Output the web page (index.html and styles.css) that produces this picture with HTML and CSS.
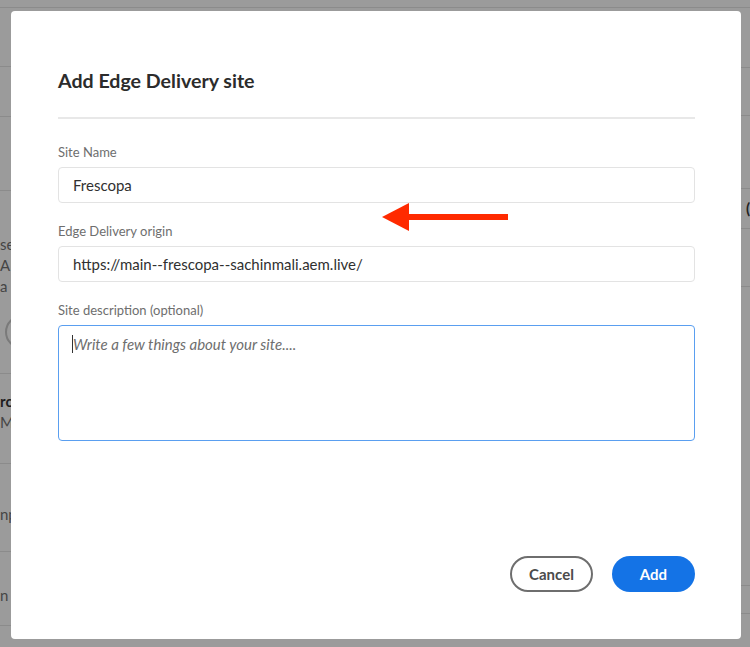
FILE: index.html
```html
<!DOCTYPE html>
<html lang="en">
<head>
<meta charset="utf-8">
<title>Add Edge Delivery site</title>
<link rel="stylesheet" href="styles.css">
</head>
<body>
<div class="backdrop">
  <div class="bg-col bg-left">
    <div class="row h7"></div>
    <div class="row h59"></div>
    <div class="row h50"></div>
    <div class="row h74"></div>
    <div class="row h183">
      <div class="bg-text l1">se</div>
      <div class="bg-text l2">AI</div>
      <div class="bg-text l3">a b</div>
      <div class="bg-circle"></div>
    </div>
    <div class="row h90">
      <div class="bg-text bold l4">rc</div>
      <div class="bg-text l5">M</div>
    </div>
    <div class="row h88">
      <div class="bg-text l6">np</div>
    </div>
    <div class="row h74">
      <div class="bg-text l7">n</div>
    </div>
  </div>
  <div class="bg-col bg-right">
    <div class="row h7"></div>
    <div class="row h60"></div>
    <div class="row h48"></div>
    <div class="row h73"></div>
    <div class="row h40"><div class="bg-text dark r1">(</div></div>
    <div class="row h58"></div>
    <div class="row h299"></div>
    <div class="row h28"></div>
  </div>
</div>

<div class="modal">
  <h1 class="title">Add Edge Delivery site</h1>
  <div class="divider"></div>
  <div class="field">
    <div class="label">Site Name</div>
    <div class="input">Frescopa</div>
  </div>
  <div class="field">
    <div class="label">Edge Delivery origin</div>
    <div class="input">https://main--frescopa--sachinmali.aem.live/</div>
  </div>
  <div class="field">
    <div class="label">Site description (optional)</div>
    <div class="textarea"><span class="caret"></span><span class="placeholder">Write a few things about your site....</span></div>
  </div>
  <div class="footer">
    <button class="btn btn-secondary">Cancel</button>
    <button class="btn btn-primary">Add</button>
  </div>
</div>

<svg class="arrow" width="127" height="28" viewBox="0 0 127 28">
  <polygon points="0,14 27,0 27,28" fill="#ff2a00"/>
  <rect x="26" y="11" width="100" height="6" fill="#ff2a00"/>
</svg>
</body>
</html>
```
FILE: styles.css
```css
html, body {
  margin: 0;
  padding: 0;
}
body {
  width: 750px;
  height: 647px;
  overflow: hidden;
  background: #9b9b9b;
  font-family: "Lato", "Noto Sans", sans-serif;
  position: relative;
}
.backdrop {
  display: grid;
  grid-template-columns: 375px 375px;
  height: 647px;
}
.bg-col {
  display: flex;
  flex-direction: column;
}
.row {
  border-bottom: 1px solid #8b8b8b;
  position: relative;
  box-sizing: border-box;
}
.h7 { height: 8px; }
.h28 { height: 28px; }
.h40 { height: 40px; }
.h48 { height: 48px; }
.h50 { height: 50px; }
.h58 { height: 58px; }
.h59 { height: 59px; }
.h60 { height: 60px; }
.h73 { height: 73px; }
.h74 { height: 74px; }
.h88 { height: 88px; }
.h90 { height: 90px; }
.h183 { height: 183px; }
.h299 { height: 299px; }
.bg-text {
  position: absolute;
  left: 0;
  font-size: 15px;
  line-height: 18px;
  color: #454545;
}
.bg-text.bold { font-weight: 700; color: #1e1e1e; }
.bg-text.dark { color: #222; font-weight: 700; left: auto; right: 0; }
.l1 { top: 44px; }
.l2 { top: 65px; }
.l3 { top: 86px; }
.l4 { top: 18px; }
.l5 { top: 39px; }
.l6 { top: 41px; }
.l7 { top: 34px; }
.r1 { top: 10px; }
.bg-circle {
  position: absolute;
  left: 5px;
  top: 124px;
  width: 30px;
  height: 30px;
  border: 2px solid #7a7a7a;
  border-radius: 50%;
}

.modal {
  position: absolute;
  left: 11px;
  top: 11px;
  width: 730px;
  height: 628px;
  box-sizing: border-box;
  background: #fff;
  border-radius: 4px;
  padding: 57px 46px 47px 47px;
  display: flex;
  flex-direction: column;
}
.title {
  margin: 0;
  font-size: 19.6px;
  line-height: 26px;
  font-weight: 700;
  color: #2c2c2c;
}
.divider {
  height: 2px;
  background: #e8e8e8;
  margin-top: 23px;
}
.field {
  display: flex;
  flex-direction: column;
  gap: 6px;
  margin-top: 19px;
}
.divider + .field { margin-top: 24px; }
.label {
  font-size: 13px;
  line-height: 18px;
  color: #6e6e6e;
}
.input {
  height: 36px;
  box-sizing: border-box;
  border: 1px solid #e3e3e3;
  border-radius: 4px;
  padding: 0 14px;
  font-size: 15px;
  line-height: 34px;
  color: #303030;
}
.textarea {
  height: 116px;
  box-sizing: border-box;
  border: 1px solid #5a9ff0;
  border-radius: 4px;
  padding: 7px 14px;
  font-size: 15px;
  line-height: 22px;
  display: flex;
  align-items: flex-start;
}
.caret {
  width: 1px;
  height: 18px;
  margin-top: 2px;
  margin-left: -1px;
  background: #333;
}
.placeholder {
  font-style: italic;
  color: #6e6e6e;
}
.footer {
  margin-top: auto;
  display: flex;
  justify-content: flex-end;
  gap: 19px;
}
.btn {
  width: 83px;
  height: 36px;
  border-radius: 18px;
  font-family: "Lato", "Noto Sans", sans-serif;
  font-size: 15px;
  font-weight: 700;
  box-sizing: border-box;
  cursor: pointer;
}
.btn-secondary {
  background: #fff;
  border: 2px solid #6e6e6e;
  color: #4b4b4b;
}
.btn-primary {
  background: #1473e6;
  border: none;
  color: #fff;
}
.arrow {
  position: absolute;
  left: 382px;
  top: 203px;
}
```
